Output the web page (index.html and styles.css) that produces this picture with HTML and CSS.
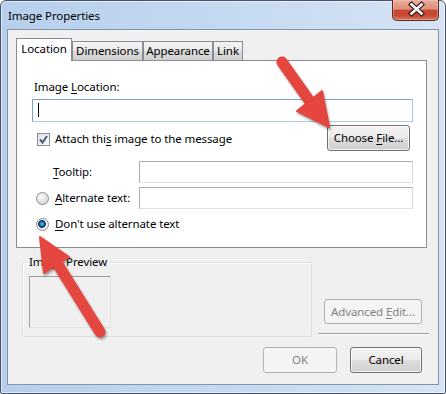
FILE: index.html
```html
<!DOCTYPE html>
<html lang="en">
<head>
<meta charset="UTF-8">
<title>Image Properties</title>
<link rel="stylesheet" href="styles.css">
</head>
<body>
<div class="window">
    <div class="titlebar">
        <span class="title">Image Properties</span>
        <div class="close">
            <svg width="47" height="20" viewBox="0 0 47 20">
                <path d="M18.5 5.5 L28.5 14.5 M28.5 5.5 L18.5 14.5" stroke="#3a1f1b" stroke-width="5" stroke-linecap="square"/>
                <path d="M18.5 5.5 L28.5 14.5 M28.5 5.5 L18.5 14.5" stroke="#fff" stroke-width="2.6" stroke-linecap="square"/>
            </svg>
        </div>
    </div>

    <div class="client">
        <div class="tabs">
            <div class="tab active">Location</div>
            <div class="tab tab-dim">Dimensions</div>
            <div class="tab tab-app">Appearance</div>
            <div class="tab tab-link">Link</div>
        </div>

        <div class="panel">
            <div class="field-label">Image <u>L</u>ocation:</div>
            <div class="input input-focus"><span class="caret"></span></div>

            <div class="row row-attach">
                <span class="check">
                    <svg width="11" height="11" viewBox="0 0 11 11">
                        <path d="M2 5.5 L4.5 8.5 L9 2" fill="none" stroke="#4a5f87" stroke-width="2"/>
                    </svg>
                </span>
                <span class="check-label">Attach thi<u>s</u> image to the message</span>
                <button class="btn btn-choose">Choose <u>F</u>ile...</button>
            </div>

            <div class="row row-tooltip">
                <span class="tooltip-label"><u>T</u>ooltip:</span>
                <div class="input input-wide"></div>
            </div>

            <div class="row row-alt">
                <span class="radio"></span>
                <span class="radio-label"><u>A</u>lternate text:</span>
                <div class="input input-wide"></div>
            </div>

            <div class="row row-noalt">
                <span class="radio checked"></span>
                <span class="radio-label"><u>D</u>on't use alternate text</span>
            </div>
        </div>

        <div class="lower">
            <div class="group">
                <div class="group-label">Image Preview</div>
                <div class="preview"></div>
            </div>
            <div class="side">
                <button class="btn btn-advanced" disabled>Advanced <u>E</u>dit...</button>
                <div class="separator"></div>
            </div>
        </div>

        <div class="footer">
            <button class="btn btn-ok" disabled>OK</button>
            <button class="btn btn-cancel">Cancel</button>
        </div>
    </div>
</div>

<!-- annotation arrows drawn over the dialog -->
<svg class="arrows" width="446" height="394" viewBox="0 0 446 394">
    <g class="arrow">
        <line x1="282" y1="62" x2="311" y2="103" stroke="#e5463f" stroke-width="11" stroke-linecap="round"/>
        <polygon points="297,111 329,127 322,91" fill="#e5463f" stroke="#e5463f" stroke-width="2" stroke-linejoin="round"/>
    </g>
    <g class="arrow">
        <line x1="100" y1="332" x2="57" y2="263" stroke="#e5463f" stroke-width="11" stroke-linecap="round"/>
        <polygon points="40,237 44,273 69,257" fill="#e5463f" stroke="#e5463f" stroke-width="2" stroke-linejoin="round"/>
    </g>
</svg>
</body>
</html>
```

FILE: styles.css
```css
body, html {
    margin: 0;
    padding: 0;
    background: #fff;
}

body {
    position: relative;
    width: 446px;
    height: 394px;
    font-family: "Noto Sans", "Liberation Sans", sans-serif;
    font-size: 11.5px;
    letter-spacing: -0.1px;
    line-height: 16px;
    color: #000;
}

u {
    text-decoration-thickness: 1px;
    text-underline-offset: 2px;
}

.window {
    box-sizing: border-box;
    width: 446px;
    height: 394px;
    display: flex;
    flex-direction: column;
    padding: 0 6px 8px 6px;
    border: 1px solid #46536a;
    border-radius: 6px 6px 2px 2px;
    background: linear-gradient(to right, #b7cfec, #c6daf1 55%, #d6e4f4);
    box-shadow: inset 0 0 0 1px rgba(255, 255, 255, 0.55);
}

.titlebar {
    display: flex;
    justify-content: space-between;
    align-items: flex-start;
    height: 28px;
}

.title {
    padding: 7px 0 0 1px;
}

.close {
    box-sizing: border-box;
    width: 47px;
    height: 21px;
    margin-top: -1px;
    border: 1px solid #5a2c25;
    border-top: none;
    border-radius: 0 0 5px 5px;
    background: linear-gradient(#e9ab9c 0%, #df8f7d 45%, #c8462e 52%, #c64a31 78%, #d8795f 100%);
    box-shadow: inset 0 0 0 1px rgba(255, 220, 210, 0.35);
}

.close svg {
    display: block;
    margin-top: -1px;
}

.client {
    flex: 1;
    display: flex;
    flex-direction: column;
    border: 1px solid #8295ae;
    background: #f0f0f0;
}

/* tabs */

.tabs {
    display: flex;
    align-items: flex-end;
    height: 22px;
    margin: 8px 0 0 8px;
}

.tab {
    box-sizing: border-box;
    height: 19px;
    padding-top: 1px;
    text-align: center;
    border: 1px solid #898c95;
    border-bottom: none;
    background: linear-gradient(#f4f4f4, #e8e8e8 50%, #dadada 52%, #d0d0d0);
}

.tab.active {
    position: relative;
    z-index: 1;
    width: 56px;
    height: 23px;
    margin-bottom: -1px;
    padding-top: 2px;
    background: #fff;
}

.tab-dim { width: 71px; }
.tab-app { width: 70px; }
.tab-link { width: 30px; }

.panel {
    box-sizing: border-box;
    width: 411px;
    height: 188px;
    margin-left: 8px;
    padding: 18px 13px 0 15px;
    border: 1px solid #898c95;
    background: #fff;
}

.field-label {
    margin-left: 2px;
}

.input {
    box-sizing: border-box;
    height: 22px;
    border: 1px solid #abadb3;
    border-right-color: #d5d8de;
    border-bottom-color: #dfe3e8;
    background: #fff;
}

.input-focus {
    height: 23px;
    margin-top: 4px;
    padding: 3px 0 0 5px;
    border-color: #6ea4d6;
    border-bottom-color: #a9cbeb;
    border-right-color: #a9cbeb;
}

.caret {
    display: block;
    width: 1px;
    height: 14px;
    background: #000;
}

.input-wide {
    width: 274px;
    margin-left: auto;
}

.row {
    display: flex;
    align-items: center;
}

.row-attach {
    align-items: flex-start;
    height: 26px;
    margin-top: 3px;
}

.check {
    box-sizing: border-box;
    width: 13px;
    height: 13px;
    margin: 8px 0 0 5px;
    padding: 0;
    border: 1px solid #8f8f8f;
    background: linear-gradient(135deg, #e0e0e0, #fcfcfc);
}

.check svg {
    display: block;
}

.check-label {
    margin: 6px 0 0 5px;
}

.btn {
    box-sizing: border-box;
    padding: 0;
    font: inherit;
    letter-spacing: inherit;
    color: #000;
    border: 1px solid #707070;
    border-radius: 3px;
    background: linear-gradient(#f2f2f2, #ebebeb 48%, #dddddd 52%, #cfcfcf);
    box-shadow: inset 0 0 0 1px rgba(255, 255, 255, 0.7);
}

.btn:disabled {
    color: #838383;
    border-color: #adb2b5;
    background: #f4f4f4;
    box-shadow: none;
}

.btn-choose {
    width: 83px;
    height: 26px;
    margin: 0 3px 0 auto;
}

.row-tooltip {
    margin-top: 10px;
}

.tooltip-label {
    margin-left: 21px;
}

.row-alt {
    margin-top: 4px;
}

.row-noalt {
    height: 16px;
    margin-top: 7px;
}

.radio {
    box-sizing: border-box;
    width: 13px;
    height: 13px;
    margin: 1px 0 0 4px;
    border: 1px solid #8e8f8f;
    border-radius: 50%;
    background: radial-gradient(circle at 40% 35%, #fafafa, #dadada 70%, #c8c8c8);
}

.radio.checked {
    background:
        radial-gradient(circle at 5px 5px, #8fd6f7 0, #2b84c2 1.5px, #10487a 3px, #0c355c 3.6px, transparent 4.1px),
        radial-gradient(circle, #f5f5f5 50%, #d6d6d6);
}

.radio-label {
    margin-left: 6px;
}

/* preview + advanced edit */

.lower {
    display: flex;
    height: 89px;
}

.group {
    box-sizing: border-box;
    width: 290px;
    height: 75px;
    margin: 14px 0 0 14px;
    border: 1px solid #d5dfe5;
    border-radius: 3px;
    box-shadow: inset 1px 1px 0 #fff;
}

.group-label {
    width: fit-content;
    margin: -9px 0 0 4px;
    padding: 0 2px;
    background: #f0f0f0;
}

.preview {
    box-sizing: border-box;
    width: 82px;
    height: 52px;
    margin: 6px 0 0 6px;
    border: 1px solid #a0a0a0;
    border-right-color: #e2e2e2;
    border-bottom-color: #e2e2e2;
}

.side {
    width: 111px;
    margin-left: 6px;
}

.btn-advanced {
    display: block;
    width: 98px;
    height: 25px;
    margin: 51px 0 0 6px;
}

.separator {
    margin-top: 9px;
    border-top: 1px solid #a0a0a0;
    border-bottom: 1px solid #fff;
}

.footer {
    display: flex;
    justify-content: flex-end;
    gap: 13px;
    margin-top: 10px;
    padding-right: 16px;
}

.btn-ok {
    width: 74px;
    height: 26px;
}

.btn-cancel {
    width: 72px;
    height: 26px;
}

.arrows {
    position: absolute;
    left: 0;
    top: 0;
    pointer-events: none;
}

.arrow {
    filter: drop-shadow(1px 2px 1px rgba(0, 0, 0, 0.35));
}
```
